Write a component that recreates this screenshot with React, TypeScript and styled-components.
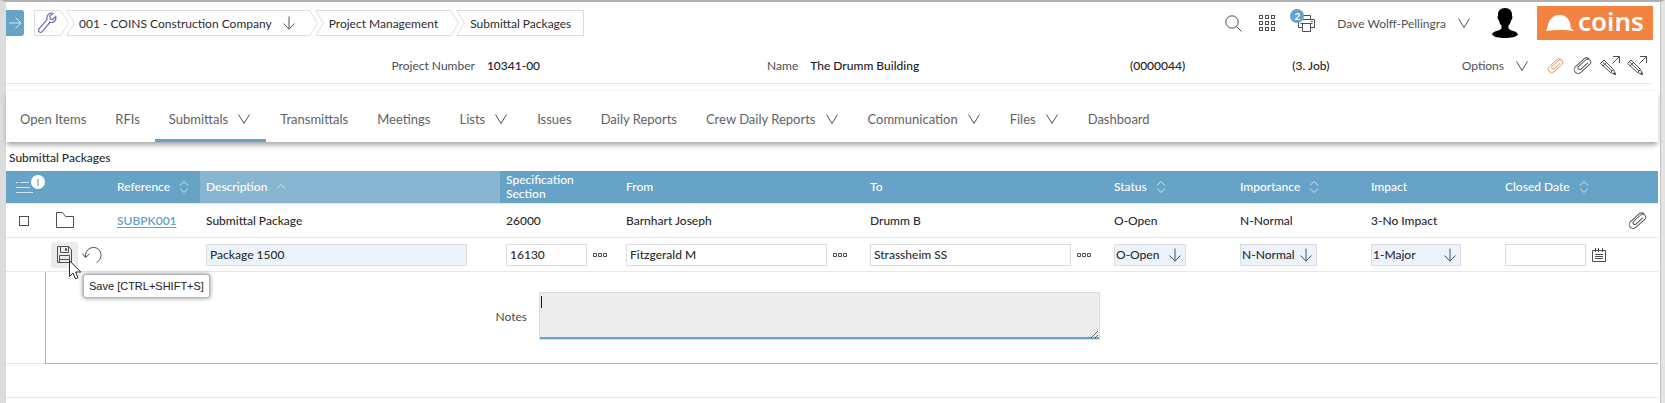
import React from "react";
import styled, { createGlobalStyle } from "styled-components";

const BLUE = "#67a2c7";
const LINE = "#e6e7e8";
const FIELD = "#dcdddf";

const Global = createGlobalStyle`
  * { box-sizing: border-box; }
  body { margin: 0; background: #fff; }
  body, button, input, select, textarea { font-family: Lato, "Liberation Sans", sans-serif; font-size: 12px; color: #2b2d30; }
  button { padding: 0; border: 0; background: none; cursor: pointer; }
  a { text-decoration: none; color: inherit; }
  svg { display: block; flex: none; }
`;

const Page = styled.div`
  min-height: 100vh;
  display: flex;
  flex-direction: column;
  border-top: 2px solid #b0b0b0;
  border-left: 6px solid #dcdcdc;
  border-right: 4px solid #e4e4e4;
`;
const Content = styled.main`
  flex: 1;
  padding-right: 2px;
  border-right: 1px solid #c4c4c4;
`;
const TopBar = styled.header`
  display: flex;
  align-items: center;
  height: 42px;
  padding-right: 5px;
`;
const OpenMenu = styled.button`
  width: 18px;
  height: 26px;
  margin-right: 10px;
  background: ${BLUE};
  border-radius: 0 3px 3px 0;
  display: flex;
  align-items: center;
  justify-content: center;
`;
const Crumbs = styled.nav`
  display: flex;
  flex: 1;
`;
const Crumb = styled.a`
  display: flex;
  height: 26px;
  margin-right: -3px;
`;
const CrumbBody = styled.span`
  display: flex;
  align-items: center;
  gap: 10px;
  padding: 0 12px 0 5px;
  border: solid ${FIELD};
  border-width: 1px 0;
  white-space: nowrap;
`;
const FirstBody = styled(CrumbBody)`
  padding: 0 3px 0 2px;
  border-left-width: 1px;
`;
const MenuBody = styled(CrumbBody)`
  padding: 0 13px 0 4px;
`;
const LastBody = styled(CrumbBody)`
  border-right-width: 1px;
`;
const Tools = styled.div`
  display: flex;
  align-items: center;
`;
const Tool = styled.button<{ $gap?: number }>`
  display: flex;
  align-items: center;
  gap: 12px;
  position: relative;
  margin-left: ${(p) => p.$gap ?? 0}px;
  color: #4f5256;
`;
const Badge = styled.span`
  position: absolute;
  left: -8px;
  top: -6px;
  width: 14px;
  height: 14px;
  border-radius: 50%;
  background: ${BLUE};
  color: #fff;
  font-size: 10px;
  line-height: 14px;
  font-weight: 700;
  text-align: center;
`;
const Logo = styled.a`
  display: flex;
  align-items: center;
  width: 116px;
  height: 34px;
  margin-left: 19px;
  padding-left: 9px;
  gap: 4px;
  background: #f28341;
  color: #fff;
  font: 600 26px/30px "Noto Sans", "Open Sans", sans-serif;
`;
const LogoName = styled.span`
  padding-bottom: 4px;
`;

const Project = styled.section`
  display: grid;
  grid-template-columns: 536fr 592fr 163fr 170fr auto;
  align-items: center;
  height: 40px;
  margin-right: 7px;
  padding: 4px 4px 0 0;
  border-bottom: 1px solid ${LINE};
`;
const Facts = styled.div`
  display: flex;
  justify-content: flex-end;
  gap: 12px;
`;
const Named = styled(Facts)`
  justify-content: flex-start;
  padding-left: 227px;
`;
const Label = styled.span`
  color: #4a4d51;
`;
const Strong = styled.span`
  font-weight: 500;
  color: #1f2124;
`;

const Tabs = styled.nav`
  display: flex;
  height: 52px;
  margin-top: 6px;
  border-top: 1px solid #f6f6f6;
  box-shadow: 0 4px 5px -1px rgba(0, 0, 0, 0.35);
`;
const Tab = styled.a<{ $on?: boolean }>`
  display: flex;
  align-items: center;
  gap: 10px;
  padding: 8px 15px 0 14px;
  font-size: 13px;
  color: #606367;
  border-bottom: 3px solid ${(p) => (p.$on ? BLUE : "transparent")};
  white-space: nowrap;
`;

const Title = styled.h2`
  margin: 0;
  padding: 7px 3px 4px;
  font-size: 12px;
  line-height: 18px;
  font-weight: 500;
`;
const Grid = styled.table`
  width: 100%;
  table-layout: fixed;
  border-collapse: separate;
  border-spacing: 0;
`;
const Col = styled.col<{ $w?: string }>`
  width: ${(p) => p.$w ?? "auto"};
`;
const Th = styled.th<{ $sorted?: boolean }>`
  height: 33px;
  padding: 0 6px;
  border-bottom: 1px solid ${LINE};
  background: ${(p) => (p.$sorted ? "#88b6d1" : BLUE)};
  background-clip: padding-box;
  color: #fff;
  font-weight: 500;
  line-height: 14px;
  text-align: left;
`;
const Heading = styled.span`
  display: flex;
  align-items: center;
  gap: 9px;
  position: relative;
`;
const CountDot = styled.span`
  position: absolute;
  left: 19px;
  top: -5px;
  width: 14px;
  height: 14px;
  border-radius: 50%;
  background: #fff;
  color: ${BLUE};
  font-size: 10px;
  text-align: center;
`;
const Td = styled.td`
  height: 34px;
  padding: 0 6px;
  border-bottom: 1px solid ${LINE};
  font-weight: 500;
`;
const Center = styled.div`
  display: flex;
  align-items: center;
  justify-content: center;
  width: 27px;
`;
const End = styled.div`
  display: flex;
  justify-content: flex-end;
  padding-right: 5px;
`;
const Tick = styled.input`
  appearance: none;
  display: block;
  width: 10px;
  height: 10px;
  margin: 0 0 0 7px;
  border: 1px solid #4c4c4c;
`;
const RefLink = styled.a`
  color: ${BLUE};
  font-weight: 600;
  text-decoration: underline;
  text-underline-offset: 2px;
`;
const Field = styled.div`
  display: flex;
  align-items: center;
  gap: 6px;
`;
const DescriptionField = styled(Field)`
  padding-right: 27px;
`;
const Text = styled.input<{ $tint?: boolean }>`
  flex: 1;
  min-width: 0;
  height: 22px;
  padding: 0 3px;
  border: 1px solid ${FIELD};
  background: ${(p) => (p.$tint ? "#eef3fb" : "#fff")};
  font-weight: 500;
`;
const IconButton = styled.button<{ $hot?: boolean }>`
  display: flex;
  align-items: center;
  justify-content: center;
  width: 27px;
  height: 26px;
  border-radius: 3px;
  background: ${(p) => (p.$hot ? "#ececec" : "none")};
`;
const LookupButton = styled.button<{ $wide?: boolean }>`
  width: 14px;
  margin-right: ${(p) => (p.$wide ? 11 : 7)}px;
`;
const PickWrap = styled.div<{ $w: number }>`
  position: relative;
  width: ${(p) => p.$w}px;
`;
const Pick = styled.select`
  appearance: none;
  display: block;
  width: 100%;
  height: 22px;
  padding: 0 1px;
  border: 1px solid ${FIELD};
  border-radius: 0;
  background: #eef3fb;
  font-weight: 500;
`;
const PickArrow = styled.span`
  position: absolute;
  right: 4px;
  top: 4px;
  pointer-events: none;
`;
const SaveWrap = styled.div`
  position: relative;
  display: flex;
`;
const Pointer = styled.span`
  position: absolute;
  left: 18px;
  top: 18px;
  z-index: 2;
`;
const Tooltip = styled.span`
  position: absolute;
  left: 32px;
  top: 32px;
  z-index: 1;
  padding: 3px 5px;
  border: 1px solid #b5b5b5;
  border-radius: 3px;
  background: #fff;
  box-shadow: 0 0 4px rgba(0, 0, 0, 0.5);
  font: 400 11px/16px "Liberation Sans", Arial, sans-serif;
  color: #222;
  white-space: nowrap;
`;
const DetailCell = styled.td`
  padding: 0;
  border-left: 1px solid #b4b4b4;
  border-bottom: 1px solid #b4b4b4;
`;
const Detail = styled.div`
  display: grid;
  grid-template-columns: 481fr 561fr 546fr;
  gap: 12px;
  align-items: center;
  padding: 20px 0 23px;
`;
const NotesLabel = styled.label`
  color: #4a4d51;
  text-align: right;
`;
const NotesBox = styled.div`
  position: relative;
`;
const Notes = styled.textarea`
  display: block;
  width: 100%;
  height: 48px;
  padding: 2px;
  border: 1px solid ${FIELD};
  outline: 0;
  background: #ededed;
  box-shadow: inset 0 -2px 0 ${BLUE};
`;
const Caret = styled.span`
  position: absolute;
  left: 2px;
  top: 4px;
  width: 1px;
  height: 12px;
  background: #111;
`;

const stroke = { fill: "none", stroke: "#4d5054", strokeWidth: 1 } as const;

const Chevron = ({ width = 12 }: { width?: number }) => (
  <svg width={width} height="12" viewBox={`0 0 ${width} 12`} {...stroke}><path d="M.5 1.500 6 10.500 11.500 1.500" /></svg>
);
const DownArrow = () => (
  <svg width="14" height="14" viewBox="0 0 14 14" {...stroke}><path d="M7 .5V13M1.500 7.500 7 13.200 12.500 7.500" /></svg>
);
const CapStart = () => (
  <svg width="9" height="26" viewBox="0 0 9 26" fill="none" stroke={FIELD}><path d="M9 .5H.8L8.500 13 .8 25.500H9" /></svg>
);
const CapEnd = () => (
  <svg width="9" height="26" viewBox="0 0 9 26" fill="none" stroke={FIELD}><path d="M0 .5H.8L8.500 13 .8 25.500H0" /></svg>
);
const Sort = ({ up }: { up?: boolean }) => (
  <svg width="10" height="14" viewBox="0 0 10 14" fill="none" stroke="#d6e6f0">
    {up ? <path d="M1 8.500 5 4.500 9 8.500" /> : <path d="M1 5.500 5 1.500 9 5.500M1 8.500 5 12.500 9 8.500" />}
  </svg>
);
const Clip = ({ color = "#4d5054", size = 19 }: { color?: string; size?: number }) => (
  <svg width={size} height={size} viewBox="0 0 22 22" fill="none" stroke={color} strokeWidth="1.100">
    <path transform="rotate(-42 11 11) translate(-.5 6)" d="M18 6.900H7.500A2.100 2.100 0 0 1 7.500 2.700H18.500A3.500 3.500 0 0 1 18.500 9.700H4.700A4.600 4.600 0 0 1 4.700 .5H17.500Q21.500 .5 22.500 4.200" />
  </svg>
);
const Pencil = () => (
  <svg width="20" height="20" viewBox="0 0 20 20" {...stroke}>
    <path d="M.5 7.500 4 4 13.500 13.500 15.500 18.500 10.500 16.500ZM2.200 5.700 12 15M10.500 16.500 13.500 13.500M3 10 6.500 6.500M13 .5H19.500V7M19.500 .5 12.500 7.500" />
    <path d="M13.300 17.600 15.500 18.500 14.800 16.500Z" fill="#4d5054" />
  </svg>
);
const Dots = () => (
  <svg width="14" height="4" viewBox="0 0 14 4" {...stroke}><path d="M.5.5h3v3h-3zM5.500.5h3v3h-3zM10.500.5h3v3h-3z" /></svg>
);

const Lookup = ({ label, value, wide }: { label: string; value: string; wide?: boolean }) => (
  <Field>
    <Text aria-label={label} defaultValue={value} />
    <LookupButton $wide={wide} aria-label={`Look up ${label}`}><Dots /></LookupButton>
  </Field>
);
const Choice = ({ label, value, width }: { label: string; value: string; width: number }) => (
  <PickWrap $w={width}>
    <Pick aria-label={label} defaultValue={value}><option>{value}</option></Pick>
    <PickArrow><DownArrow /></PickArrow>
  </PickWrap>
);

const tabs: { name: string; menu?: boolean; on?: boolean }[] = [
  { name: "Open Items" },
  { name: "RFIs" },
  { name: "Submittals", menu: true, on: true },
  { name: "Transmittals" },
  { name: "Meetings" },
  { name: "Lists", menu: true },
  { name: "Issues" },
  { name: "Daily Reports" },
  { name: "Crew Daily Reports", menu: true },
  { name: "Communication", menu: true },
  { name: "Files", menu: true },
  { name: "Dashboard" },
];

const columns = ["39px", "66px", "89px", undefined, "120px", "14.77%", "14.77%", "126px", "131px", "134px", "113px", "46px"];

export default function App() {
  return (
    <Page>
      <Global />
      <Content>
        <TopBar>
          <OpenMenu aria-label="Open menu">
            <svg width="14" height="14" viewBox="0 0 14 14" fill="none" stroke="#d5e6f0"><path d="M1 7H13M7.500 1.500 13 7 7.500 12.500" /></svg>
          </OpenMenu>
          <Crumbs aria-label="Breadcrumb">
            <Crumb href="#" aria-label="Tools">
              <FirstBody>
                <svg width="20" height="22" viewBox="0 0 20 22" fill="none" stroke="#7a62b5" strokeWidth="1.200">
                  <path d="M15.800 1.400 12.800 4.300 13.400 6.900 15.800 7.500 18.700 4.600C19.700 8.500 16.500 11.200 13 10.300L5.200 19.700C3.200 21.800 .2 19 2.200 16.600L10 7.600C9.200 3.600 12 .3 15.800 1.400Z" />
                </svg>
              </FirstBody>
              <CapEnd />
            </Crumb>
            <Crumb href="#">
              <CapStart />
              <MenuBody>001 - COINS Construction Company <DownArrow /></MenuBody>
              <CapEnd />
            </Crumb>
            <Crumb href="#">
              <CapStart />
              <CrumbBody>Project Management</CrumbBody>
              <CapEnd />
            </Crumb>
            <Crumb href="#">
              <CapStart />
              <LastBody>Submittal Packages</LastBody>
            </Crumb>
          </Crumbs>
          <Tools>
            <Tool aria-label="Search">
              <svg width="17" height="17" viewBox="0 0 17 17" {...stroke}><circle cx="7" cy="7" r="6.200" /><path d="M11.500 11.500 16.500 16.500" /></svg>
            </Tool>
            <Tool aria-label="Applications" $gap={17}>
              <svg width="16" height="16" viewBox="0 0 16 16" {...stroke}>
                {[0, 6, 12].map((y) => [0, 6, 12].map((x) => <rect key={`${x}-${y}`} x={x + 0.5} y={y + 0.5} width="3" height="3" />))}
              </svg>
            </Tool>
            <Tool aria-label="Print queue" $gap={23}>
              <svg width="17" height="17" viewBox="0 0 17 17" {...stroke}>
                <path d="M4.500 4.500V.5H12.500V4.500M4.500 12.500H.5V4.500H16.500V12.500H12.500M2.500 8.500H14.500M4.500 8.500V16.500H12.500V8.500M13 6.500H15" />
              </svg>
              <Badge>2</Badge>
            </Tool>
            <Tool $gap={22}>Dave Wolff-Pellingra <Chevron /></Tool>
            <Tool aria-label="Profile" $gap={22}>
              <svg width="26" height="30" viewBox="0 0 26 30">
                <path d="M13 0C17.500 0 20.500 2.800 20 8C20.900 8.500 20.300 11.700 19 12.400C18.500 15 17.500 16.500 16.500 17.500V20.500C18 23 25 22.500 26 26.500C24.500 29 19 30 13 30S1.500 29 0 26.500C1 22.500 8 23 9.500 20.500V17.500C8.500 16.500 7.500 15 7 12.400C5.700 11.700 5.100 8.500 6 8C5.500 2.800 8.500 0 13 0Z" />
              </svg>
            </Tool>
            <Logo href="#">
              <svg width="28" height="18" viewBox="0 0 28 18" fill="#fff"><path d="M0 17C2 14 1.500 4.500 10 1.300C17-1.200 24.500 3.800 24.500 12.500C24.500 15 27 15.500 28 17C20 15.500 8 16 0 17Z" /></svg>
              <LogoName>coins</LogoName>
            </Logo>
          </Tools>
        </TopBar>

        <Project>
          <Facts><Label>Project Number</Label><Strong>10341-00</Strong></Facts>
          <Named><Label>Name</Label><Strong>The Drumm Building</Strong></Named>
          <Strong>(0000044)</Strong>
          <Strong>(3. Job)</Strong>
          <Tools>
            <Tool>Options <Chevron /></Tool>
            <Tool aria-label="Attachment" $gap={19}><Clip color="#f28a50" size={17} /></Tool>
            <Tool aria-label="Attachments" $gap={9}><Clip /></Tool>
            <Tool aria-label="Edit" $gap={8}><Pencil /></Tool>
            <Tool aria-label="Edit details" $gap={7}><Pencil /></Tool>
          </Tools>
        </Project>

        <Tabs aria-label="Sections">
          {tabs.map((t) => (
            <Tab key={t.name} href="#" $on={t.on}>{t.name}{t.menu && <Chevron width={13} />}</Tab>
          ))}
        </Tabs>

        <Title>Submittal Packages</Title>
        <Grid>
          <colgroup>{columns.map((w, i) => <Col key={i} $w={w} />)}</colgroup>
          <thead>
            <tr>
              <Th aria-label="Row options">
                <Heading>
                  <svg width="22" height="14" viewBox="0 0 22 14" stroke="#d3e4ef"><path d="M4 2.500H6M8 2.500H17M4 7.500H18M4 12.500H21" /></svg>
                  <CountDot>I</CountDot>
                </Heading>
              </Th>
              <Th aria-label="Actions" />
              <Th><Heading>Reference <Sort /></Heading></Th>
              <Th $sorted><Heading>Description <Sort up /></Heading></Th>
              <Th>Specification Section</Th>
              <Th>From</Th>
              <Th>To</Th>
              <Th><Heading>Status <Sort /></Heading></Th>
              <Th><Heading>Importance <Sort /></Heading></Th>
              <Th>Impact</Th>
              <Th><Heading>Closed Date <Sort /></Heading></Th>
              <Th aria-label="Attachments" />
            </tr>
          </thead>
          <tbody>
            <tr>
              <Td><Tick type="checkbox" aria-label="Select SUBPK001" /></Td>
              <Td>
                <Center>
                  <svg width="18" height="17" viewBox="0 0 18 17" {...stroke}><path d="M.5 15.500V.5H6.500L9.500 4.500H17.500V15.500Z" /></svg>
                </Center>
              </Td>
              <Td><RefLink href="#">SUBPK001</RefLink></Td>
              <Td>Submittal Package</Td>
              <Td>26000</Td>
              <Td>Barnhart Joseph</Td>
              <Td>Drumm B</Td>
              <Td>O-Open</Td>
              <Td>N-Normal</Td>
              <Td>3-No Impact</Td>
              <Td />
              <Td><End><Clip /></End></Td>
            </tr>
            <tr>
              <Td />
              <Td>
                <SaveWrap>
                  <IconButton $hot aria-label="Save">
                    <svg width="15" height="17" viewBox="0 0 15 17" {...stroke}>
                      <path d="M.5.5H11.500L14.500 3.500V16.500H.5ZM3.500.5V6.500H11.500V.5M8.500 2.500H9.500V4.500H8.500ZM2.500 16V9.500H12.500V16M2.500 13.500H12.500" />
                    </svg>
                  </IconButton>
                  <IconButton aria-label="Undo">
                    <svg width="20" height="18" viewBox="0 0 20 18" {...stroke}><path d="M3.500 11C3 5 7 1.500 11.500 1.500C19.500 1.500 22 12 14.500 16.500M.5 7.500 3.500 11.500 7.500 8" /></svg>
                  </IconButton>
                  <Pointer>
                    <svg width="13" height="20" viewBox="0 0 13 20"><path d="M.5.8V16.500L4 13 6.500 18.800 9 17.700 6.600 12H11.800Z" fill="#fff" stroke="#222" /></svg>
                  </Pointer>
                  <Tooltip role="tooltip">Save [CTRL+SHIFT+S]</Tooltip>
                </SaveWrap>
              </Td>
              <Td />
              <Td><DescriptionField><Text $tint aria-label="Description" defaultValue="Package 1500" /></DescriptionField></Td>
              <Td><Lookup label="Specification Section" value="16130" /></Td>
              <Td><Lookup wide label="From" value="Fitzgerald M" /></Td>
              <Td><Lookup wide label="To" value="Strassheim SS" /></Td>
              <Td><Choice label="Status" value="O-Open" width={72} /></Td>
              <Td><Choice label="Importance" value="N-Normal" width={77} /></Td>
              <Td><Choice label="Impact" value="1-Major" width={90} /></Td>
              <Td>
                <Field>
                  <Text aria-label="Closed Date" />
                  <button aria-label="Pick date">
                    <svg width="14" height="14" viewBox="0 0 14 14" {...stroke}><path d="M.5 2.500H13.500V13.500H.5ZM3.500 0V4M6.500 0V4M10.500 0V4M3 6.500H11M3 8.500H11M3 10.500H11" /></svg>
                  </button>
                </Field>
              </Td>
              <Td />
            </tr>
            <tr>
              <Td />
              <DetailCell colSpan={11}>
                <Detail>
                  <NotesLabel htmlFor="notes">Notes</NotesLabel>
                  <NotesBox><Notes id="notes" /><Caret /></NotesBox>
                </Detail>
              </DetailCell>
            </tr>
            <tr><Td colSpan={12} /></tr>
          </tbody>
        </Grid>
      </Content>
    </Page>
  );
}
